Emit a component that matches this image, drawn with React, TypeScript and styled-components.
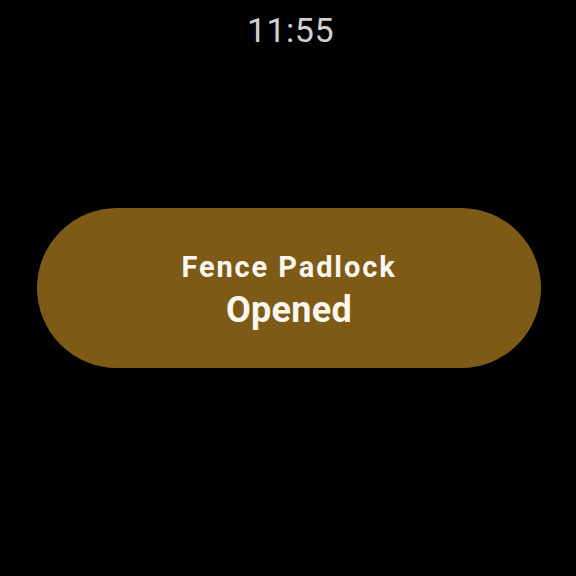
import React from "react";
import styled, { createGlobalStyle } from "styled-components";

const Global = createGlobalStyle`
  html, body { margin: 0; padding: 0; background: #000; }
  body { font-family: Roboto, "Noto Sans", sans-serif; }
`;

const Screen = styled.div`
  width: 576px;
  height: 576px;
  background: #000;
  display: grid;
  grid-template-rows: 64px 1fr 64px;
  justify-items: center;
  align-items: center;
`;

const Clock = styled.div`
  align-self: start;
  padding-top: 10px;
  padding-left: 5px;
  font-family: Roboto, sans-serif;
  font-size: 34px;
  font-weight: 400;
  letter-spacing: 0.5px;
  color: #d0d0d0;
  line-height: 40px;
`;

const Pill = styled.div`
  width: 504px;
  height: 160px;
  border-radius: 80px;
  background: #7d5a16;
  display: flex;
  flex-direction: column;
  align-items: center;
  justify-content: center;
  gap: 5px;
  margin-left: 2px;
  padding-top: 6px;
  box-sizing: border-box;
`;

const Title = styled.div<{ $size: number; $spacing: number }>`
  font-family: Roboto, sans-serif;
  font-weight: 700;
  font-size: ${(p) => p.$size}px;
  letter-spacing: ${(p) => p.$spacing}px;
  color: #fbf7ef;
  line-height: 1.2;
`;

export default function App() {
  return (
    <>
      <Global />
      <Screen>
        <Clock>11:55</Clock>
        <Pill>
          <Title $size={29} $spacing={1.9}>Fence Padlock</Title>
          <Title $size={36} $spacing={0.3}>Opened</Title>
        </Pill>
        <div />
      </Screen>
    </>
  );
}
